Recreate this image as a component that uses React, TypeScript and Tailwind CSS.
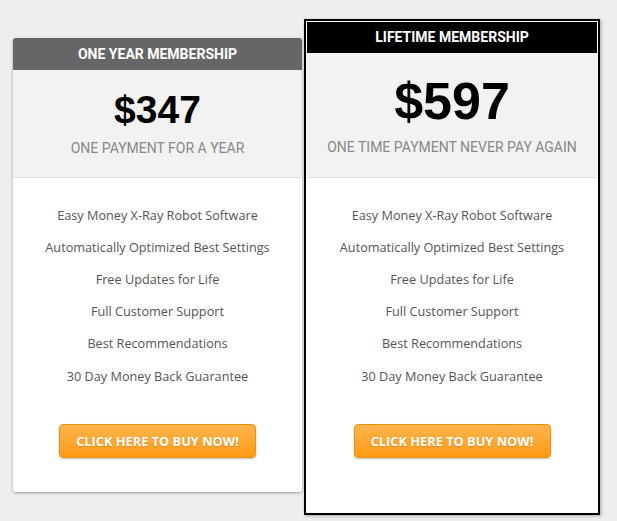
import React from "react";

const features = [
  "Easy Money X-Ray Robot Software",
  "Automatically Optimized Best Settings",
  "Free Updates for Life",
  "Full Customer Support",
  "Best Recommendations",
  "30 Day Money Back Guarantee",
];

function FeatureList() {
  return (
    <ul className="pt-[21px] font-['Open_Sans',sans-serif] text-[12.7px] text-[#555]">
      {features.map((f) => (
        <li key={f} className="flex h-[32.2px] items-center justify-center">
          {f}
        </li>
      ))}
    </ul>
  );
}

function BuyButton() {
  return (
    <div className="mt-[32px] flex justify-center">
      <a
        href="#"
        className="flex h-[34px] w-[197px] items-center justify-center rounded-[4px] border border-[#e8920f] bg-gradient-to-b from-[#ffb54a] to-[#ff9a0c] font-['Open_Sans',sans-serif] text-[12.8px] font-bold text-white shadow-[0_1px_2px_rgba(0,0,0,0.25)] [text-shadow:0_1px_1px_rgba(0,0,0,0.15)]"
      >
        CLICK HERE TO BUY NOW!
      </a>
    </div>
  );
}

export default function App() {
  return (
    <div className="flex h-[521px] w-[617px] items-start bg-[#eeeeee] pl-[13px] pt-[19px] font-['Roboto',sans-serif]">
      {/* one year */}
      <div className="mt-[19px] w-[289px] overflow-hidden rounded-[3px] bg-white shadow-[0_1px_3px_rgba(0,0,0,0.35)]">
        <div className="flex h-[32px] items-center justify-center bg-[#666666] text-[14px] font-bold text-white">
          ONE YEAR MEMBERSHIP
        </div>
        <div className="flex h-[108px] flex-col items-center border-b border-[#e3e3e3] bg-[#f2f2f2] pt-[20px]">
          <div className="font-['Liberation_Sans',Arial,sans-serif] text-[39px] leading-[40px] font-bold text-black">$347</div>
          <div className="mt-[8px] text-[14px] leading-[20px] text-[#888]">ONE PAYMENT FOR A YEAR</div>
        </div>
        <FeatureList />
        <div className="pb-[34px]">
          <BuyButton />
        </div>
      </div>

      {/* lifetime */}
      <div className="ml-[2px] w-[296px] border-2 border-black bg-white p-[1px] shadow-[1px_1px_3px_rgba(0,0,0,0.3)]">
        <div className="flex h-[31px] items-center justify-center bg-black text-[14px] font-bold text-white">
          LIFETIME MEMBERSHIP
        </div>
        <div className="flex h-[125px] flex-col items-center border-b border-[#e3e3e3] bg-[#f2f2f2] pt-[21px]">
          <div className="font-['Liberation_Sans',Arial,sans-serif] text-[52px] leading-[54px] font-bold text-black">$597</div>
          <div className="mt-[9px] text-[14px] leading-[20px] text-[#888]">ONE TIME PAYMENT NEVER PAY AGAIN</div>
        </div>
        <FeatureList />
        <div className="pb-[54px]">
          <BuyButton />
        </div>
      </div>
    </div>
  );
}
